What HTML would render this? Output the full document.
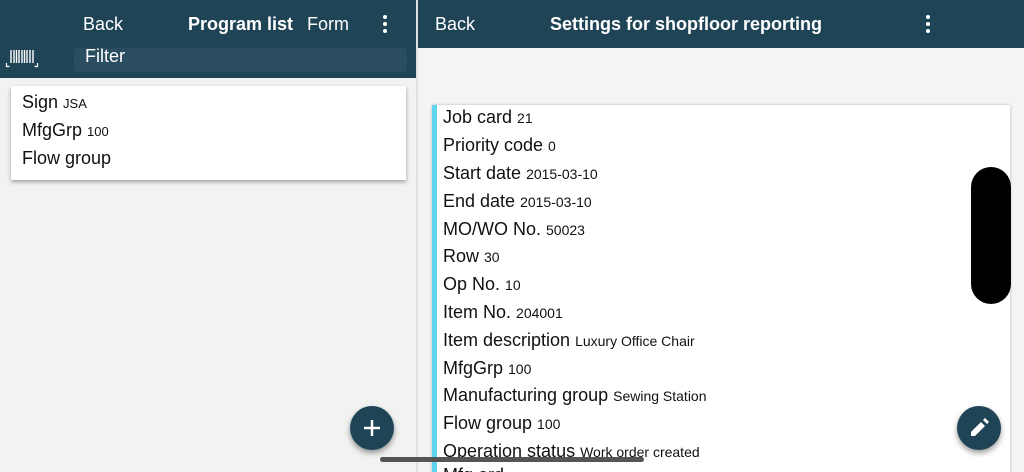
<!DOCTYPE html>
<html><head><meta charset="utf-8"><style>
*{margin:0;padding:0;box-sizing:border-box}
html,body{width:1024px;height:472px;overflow:hidden}
body{background:#f4f4f4;font-family:"Liberation Sans",sans-serif;position:relative}
.hdr{position:absolute;top:0;height:48px;background:#1f4456;color:#fff;font-size:18px}
.t{position:absolute;top:14px;white-space:nowrap}
.dots{position:absolute;top:15px;width:4px}
.dots i{display:block;width:4px;height:4px;border-radius:2px;background:#fff;margin-bottom:3px}
.row{position:absolute;left:443px;font-size:18px;color:#111;white-space:nowrap}
.row small{font-size:14px}
.lrow{position:absolute;left:22px;font-size:18px;color:#111}
.lrow small{font-size:13px}
</style></head><body>
<div style="position:absolute;left:0;top:0;width:416px;height:472px;background:#f2f2f2"></div>
<div style="position:absolute;left:416px;top:0;width:2px;height:472px;background:#e0e0e0"></div>
<div class="hdr" style="left:0;width:416px;height:78px">
  <div class="t" style="left:83px">Back</div>
  <div class="t" style="left:188px;font-weight:bold">Program list</div>
  <div class="t" style="left:307px">Form</div>
  <div class="dots" style="left:383px"><i></i><i></i><i></i></div>
  <div style="position:absolute;left:74px;top:48px;width:333px;height:24px;background:#2a4d5f;border-radius:4px"></div>
  <div class="t" style="left:85px;top:46px">Filter</div>
  <svg style="position:absolute;left:5px;top:47px" width="34" height="22" viewBox="0 0 34 22"><g stroke="#fff" fill="none"><path d="M1.5 16v3.5h3M32.5 16v3.5h-3" stroke-width="1.2"/><path d="M6 3v13M9 3v13M11.5 3v13M14 3v13M17 3v13M19.5 3v13M22 3v13M25 3v13M28 3v13" stroke-width="1.4"/></g></svg>
</div>
<div style="position:absolute;left:11px;top:86px;width:395px;height:94px;background:#fff;box-shadow:0 2px 4px rgba(0,0,0,.35)"></div>
<div class="lrow" style="top:92px">Sign <small>JSA</small></div>
<div class="lrow" style="top:120px">MfgGrp <small>100</small></div>
<div class="lrow" style="top:148px">Flow group</div>

<div class="hdr" style="left:418px;width:606px">
  <div class="t" style="left:132px;font-weight:bold;font-size:18px">Settings for shopfloor reporting</div>
  <div class="t" style="left:17px">Back</div>
  <div class="dots" style="left:508px"><i></i><i></i><i></i></div>
</div>
<div style="position:absolute;left:432px;top:105px;width:578px;height:380px;background:#fff;box-shadow:0 0 3px rgba(0,0,0,.25);border-left:5px solid #5fd4ec"></div>
<div class="row" style="top:107px">Job card <small>21</small></div>
<div class="row" style="top:135px">Priority code <small>0</small></div>
<div class="row" style="top:163px">Start date <small>2015-03-10</small></div>
<div class="row" style="top:191px">End date <small>2015-03-10</small></div>
<div class="row" style="top:219px">MO/WO No. <small>50023</small></div>
<div class="row" style="top:246px">Row <small>30</small></div>
<div class="row" style="top:274px">Op No. <small>10</small></div>
<div class="row" style="top:302px">Item No. <small>204001</small></div>
<div class="row" style="top:330px">Item description <small>Luxury Office Chair</small></div>
<div class="row" style="top:358px">MfgGrp <small>100</small></div>
<div class="row" style="top:385px">Manufacturing group <small>Sewing Station</small></div>
<div class="row" style="top:413px">Flow group <small>100</small></div>
<div class="row" style="top:441px">Operation status <small>Work order created</small></div>
<div class="row" style="top:465px">Mfg ord</div>
<div style="position:absolute;left:971px;top:167px;width:40px;height:137px;background:#000;border-radius:20px"></div>
<div style="position:absolute;left:350px;top:406px;width:44px;height:44px;border-radius:22px;background:#1f4456;box-shadow:0 3px 6px rgba(0,0,0,.4)">
 <svg width="44" height="44"><path d="M22 14v16M14 22h16" stroke="#fff" stroke-width="2.5"/></svg></div>
<div style="position:absolute;left:957px;top:406px;width:44px;height:44px;border-radius:22px;background:#1f4456;box-shadow:0 3px 6px rgba(0,0,0,.4)">
 <svg width="44" height="44"><path d="M14 30v-4l10-10 4 4-10 10zM26 14l2-2 4 4-2 2z" fill="#fff"/></svg></div>
<div style="position:absolute;left:380px;top:457px;width:264px;height:5px;border-radius:3px;background:#555"></div>
</body></html>
